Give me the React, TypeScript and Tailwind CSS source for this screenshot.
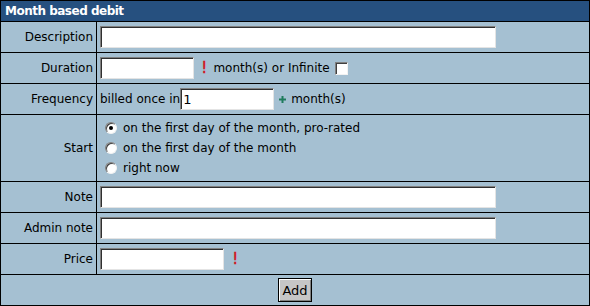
import React from "react";

const inset =
  "border border-t-[#808080] border-l-[#808080] border-b-[#e4e4e4] border-r-[#e4e4e4] bg-white shadow-[inset_1px_1px_0_#303030]";

function TextBox({ width, value }: { width: string; value?: string }) {
  return (
    <input
      type="text"
      defaultValue={value}
      className={`${inset} ${width} h-[22px] px-[2px] text-[13px] text-black outline-none`}
    />
  );
}

function Bang() {
  return <span className="text-[16px] leading-none text-[#d0161b] [-webkit-text-stroke:0.4px_#d0161b]">!</span>;
}

function Radio({ checked }: { checked?: boolean }) {
  return (
    <span className="ml-[5px] mr-[6px] flex h-[12px] w-[12px] items-center justify-center rounded-full border border-t-[#808080] border-l-[#808080] border-b-[#f2f2f2] border-r-[#f2f2f2] bg-white shadow-[inset_1px_1px_0_#404040]">
      {checked && <span className="h-[4px] w-[4px] rounded-full bg-black" />}
    </span>
  );
}

function Label({ children }: { children: React.ReactNode }) {
  return (
    <div className="flex items-center justify-end bg-[#a5c0d2] pr-[3px]">{children}</div>
  );
}

function Field({ children }: { children: React.ReactNode }) {
  return <div className="flex items-center bg-[#a5c0d2] pl-[3px]">{children}</div>;
}

export default function App() {
  const startOptions = [
    { text: "on the first day of the month, pro-rated", checked: true },
    { text: "on the first day of the month", checked: false },
    { text: "right now", checked: false },
  ];

  return (
    <div className="h-[306px] w-[590px] bg-black p-px font-['DejaVu_Sans',sans-serif] text-[12px] text-black">
      <div className="grid grid-cols-[95px_492px] grid-rows-[20px_30px_30px_30px_66px_30px_30px_30px_30px] gap-px">
        <div className="col-span-2 flex items-center bg-[#26507f] pl-[4px] text-[12px] font-bold tracking-[-0.5px] text-white">
          Month based debit
        </div>

        <Label>Description</Label>
        <Field>
          <TextBox width="w-[396px]" />
        </Field>

        <Label>Duration</Label>
        <Field>
          <TextBox width="w-[94px]" />
          <span className="ml-[7px] mr-[6px] flex items-center">
            <Bang />
          </span>
          <span>month(s) or Infinite</span>
          <span className="ml-[5px] h-[13px] w-[13px] border border-t-[#808080] border-l-[#808080] border-b-[#f2f2f2] border-r-[#f2f2f2] bg-white shadow-[inset_1px_1px_0_#404040]" />
        </Field>

        <Label>Frequency</Label>
        <Field>
          <span>billed once in</span>
          <TextBox width="w-[94px]" value="1" />
          <svg className="ml-[5px] mr-[5px]" width="7" height="7" viewBox="0 0 7 7">
            <path d="M2.5 0h2v2.5H7v2H4.5V7h-2V4.5H0v-2h2.5z" fill="#1f7b5c" />
          </svg>
          <span>month(s)</span>
        </Field>

        <Label>Start</Label>
        <div className="flex flex-col justify-center bg-[#a5c0d2] pl-[3px]">
          {startOptions.map((opt) => (
            <div key={opt.text} className="flex h-[20px] items-center">
              <Radio checked={opt.checked} />
              <span>{opt.text}</span>
            </div>
          ))}
        </div>

        <Label>Note</Label>
        <Field>
          <TextBox width="w-[396px]" />
        </Field>

        <Label>Admin note</Label>
        <Field>
          <TextBox width="w-[396px]" />
        </Field>

        <Label>Price</Label>
        <Field>
          <TextBox width="w-[124px]" />
          <span className="ml-[8px] flex items-center">
            <Bang />
          </span>
        </Field>

        <div className="col-span-2 flex items-center justify-center bg-[#a5c0d2]">
          <button
            type="button"
            className="h-[24px] w-[34px] border border-black bg-[#c6c6c6] text-[13px] leading-none shadow-[inset_1px_1px_0_#ffffff,inset_-1px_-1px_0_#808080]"
          >
            Add
          </button>
        </div>
      </div>
    </div>
  );
}
